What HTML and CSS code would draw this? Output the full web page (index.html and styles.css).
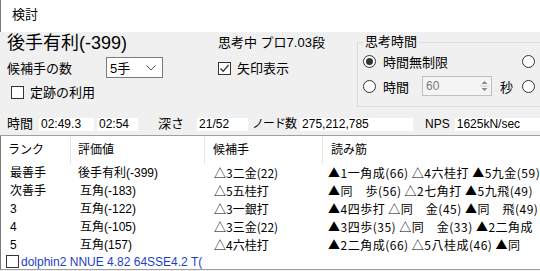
FILE: index.html
```html
<!DOCTYPE HTML>
<html>
<head>
  <meta charset="utf-8">
  <title>検討</title>
  <link rel="stylesheet" href="styles.css">
</head>
<body>
  <div class="win">
    <div class="titlebar">検討</div>

    <div class="panel">
      <div class="panel-top">
        <div class="col-left">
          <div class="eval-big">後手有利(-399)</div>
          <div class="field">
            <span class="field-label">候補手の数</span>
            <div class="select">
              <span>5手</span>
              <svg class="chev" width="10" height="6" viewBox="0 0 10 6"><path d="M0.5 0.5 L5 5 L9.5 0.5" fill="none" stroke="#555" stroke-width="1"/></svg>
            </div>
          </div>
          <div class="check check-joseki"><span class="box"></span>定跡の利用</div>
        </div>
        <div class="col-mid">
          <div class="think">思考中 プロ7.03段</div>
          <div class="check check-arrow">
            <span class="box"><svg width="11" height="11" viewBox="0 0 11 11"><path d="M1.5 5.5 L4.2 8.3 L9.5 2" fill="none" stroke="#333" stroke-width="1.3"/></svg></span>矢印表示
          </div>
        </div>
        <fieldset class="group">
          <legend>思考時間</legend>
          <div class="radio-row">
            <span class="radio on"></span><span class="radio-label">時間無制限</span>
            <span class="radio push"></span>
          </div>
          <div class="radio-row">
            <span class="radio"></span><span class="radio-label">時間</span>
            <div class="spin">
              <span class="spin-val">60</span>
              <span class="spin-btns">
                <svg width="9" height="16" viewBox="0 0 9 16"><path d="M1.5 6 L4.5 3 L7.5 6 Z" fill="#888"/><path d="M0 8 H9" stroke="#ccc"/><path d="M1.5 10 L4.5 13 L7.5 10 Z" fill="#888"/></svg>
              </span>
            </div>
            <span class="sec">秒</span>
            <span class="radio sec-radio"></span>
          </div>
        </fieldset>
      </div>

      <div class="stats">
        <span class="st-label">時間</span>
        <span class="st-box w-time">02:49.3</span>
        <span class="st-box w-total">02:54</span>
        <span class="st-label l-depth">深さ</span>
        <span class="st-box w-depth">21/52</span>
        <span class="st-label l-nodes">ノード数</span>
        <span class="st-box w-nodes">275,212,785</span>
        <span class="st-label l-nps">NPS</span>
        <span class="st-box w-nps">1625kN/sec</span>
      </div>
    </div>

    <div class="list">
      <div class="list-head">
        <div class="c1">ランク</div>
        <div class="c2">評価値</div>
        <div class="c3">候補手</div>
        <div class="c4">読み筋</div>
      </div>
      <div class="list-row">
        <div class="c1">最善手</div>
        <div class="c2">後手有利(-399)</div>
        <div class="c3">△3二金(22)</div>
        <div class="c4">▲1一角成(66) △4六桂打 ▲5九金(59)</div>
      </div>
      <div class="list-row">
        <div class="c1">次善手</div>
        <div class="c2 even">互角(-183)</div>
        <div class="c3">△5五桂打</div>
        <div class="c4">▲同　歩(56) △2七角打 ▲5九飛(49)</div>
      </div>
      <div class="list-row">
        <div class="c1">3</div>
        <div class="c2 even">互角(-122)</div>
        <div class="c3">△3一銀打</div>
        <div class="c4">▲4四歩打 △同　金(45) ▲同　飛(49)</div>
      </div>
      <div class="list-row">
        <div class="c1">4</div>
        <div class="c2 even">互角(-105)</div>
        <div class="c3">△3三金(22)</div>
        <div class="c4">▲3四歩(35) △同　金(33) ▲2二角成</div>
      </div>
      <div class="list-row">
        <div class="c1">5</div>
        <div class="c2 even">互角(157)</div>
        <div class="c3">△4六桂打</div>
        <div class="c4">▲2二角成(66) △5八桂成(46) ▲同</div>
      </div>
    </div>

    <div class="footer">
      <span class="box"></span>
      <span class="engine">dolphin2 NNUE 4.82 64SSE4.2 T(</span>
    </div>
  </div>
</body>
</html>
```

FILE: styles.css
```css
html,
body {
  margin: 0;
  padding: 0;
}
body {
  width: 540px;
  height: 271px;
  overflow: hidden;
  background: #f0f0f0;
  font-family: "Liberation Sans", "Noto Sans CJK JP", sans-serif;
  font-size: 13px;
  color: #000;
}
.win {
  width: 540px;
  overflow: hidden;
}
.titlebar {
  height: 32px;
  line-height: 30px;
  padding-left: 11px;
  background: #fff;
  border-left: 1px solid #7a7a7a;
  box-sizing: border-box;
}

/* upper panel */
.panel {
  padding-top: 1px;
  padding-bottom: 4px;
  border-bottom: 1px solid #a0a0a0;
}
.panel-top {
  display: flex;
  align-items: flex-start;
}
.col-left {
  width: 211px;
  padding-left: 7px;
  flex: none;
}
.eval-big {
  font-size: 18px;
  line-height: 20px;
  white-space: nowrap;
}
.field {
  display: flex;
  align-items: center;
  margin-top: 4px;
}
.field-label {
  width: 99px;
}
.select {
  width: 57px;
  height: 21px;
  box-sizing: border-box;
  background: #fff;
  border: 1px solid #7a7a7a;
  display: flex;
  align-items: center;
  justify-content: space-between;
  padding: 0 6px 0 3px;
}
.chev {
  display: block;
}
.check {
  display: flex;
  align-items: center;
  line-height: 15px;
}
.check .box,
.footer .box {
  width: 13px;
  height: 13px;
  box-sizing: border-box;
  border: 1px solid #333;
  background: #fff;
  margin-right: 6px;
  display: flex;
  align-items: center;
  justify-content: center;
  flex: none;
}
.check-joseki {
  margin-top: 7px;
  padding-left: 4px;
}
.col-mid {
  width: 139px;
  flex: none;
}
.think {
  line-height: 20px;
  white-space: nowrap;
}
.check-arrow {
  margin-top: 8px;
}

/* think time group */
.group {
  margin: 0;
  padding: 0 20px 9px 5px;
  border: 1px solid #dcdcdc;
  flex: none;
}
.group legend {
  padding: 0 2px;
  line-height: 18px;
}
.radio-row {
  width: 172px;
  height: 20px;
  display: flex;
  align-items: center;
}
.radio-row + .radio-row {
  margin-top: 4px;
  height: 22px;
}
.radio {
  width: 13px;
  height: 13px;
  box-sizing: border-box;
  border: 1px solid #333;
  border-radius: 50%;
  background: #fff;
  flex: none;
  display: flex;
  align-items: center;
  justify-content: center;
}
.radio.on::after {
  content: "";
  width: 7px;
  height: 7px;
  border-radius: 50%;
  background: #333;
}
.radio-label {
  margin-left: 7px;
  white-space: nowrap;
}
.push {
  margin-left: auto;
}
.spin {
  width: 70px;
  height: 20px;
  box-sizing: border-box;
  margin-left: 13px;
  border: 1px solid #c0c0c0;
  background: #f4f4f4;
  display: flex;
  align-items: center;
  justify-content: space-between;
  padding: 0 2px 0 3px;
  color: #7a7a7a;
  font-size: 12px;
}
.spin-btns svg {
  display: block;
}
.sec {
  margin-left: 8px;
}
.sec-radio {
  margin-left: auto;
}

/* stats line */
.stats {
  display: flex;
  align-items: center;
  height: 14px;
  margin-top: 10px;
  padding-left: 7px;
  white-space: nowrap;
}
.st-label {
  line-height: 14px;
}
.st-box {
  height: 13px;
  line-height: 13px;
  background: #fff;
  padding-left: 2px;
  box-sizing: border-box;
  font-size: 12px;
  flex: none;
}
.w-time {
  width: 55px;
  margin-left: 6px;
}
.w-total {
  width: 41px;
  margin-left: 3px;
}
.l-depth {
  margin-left: 20px;
}
.w-depth {
  width: 51px;
  margin-left: 13px;
}
.l-nodes {
  margin-left: 4px;
  width: 48px;
  font-size: 12px;
  letter-spacing: -1px;
}
.w-nodes {
  width: 113px;
}
.l-nps {
  margin-left: 12px;
  font-size: 12px;
}
.w-nps {
  width: 85px;
  margin-left: 5px;
}

/* candidate list */
.list {
  background: #fff;
  border-left: 1px solid #7a7a7a;
  font-size: 12px;
}
.list-head,
.list-row {
  display: flex;
  white-space: nowrap;
}
.list-head {
  height: 28px;
  line-height: 28px;
}
.list-row {
  height: 18px;
  line-height: 18px;
}
.list-head > div,
.list-row > div {
  overflow: hidden;
  flex: none;
  box-sizing: border-box;
}
.c1 {
  width: 69px;
  padding-left: 9px;
}
.c2 {
  width: 134px;
  padding-left: 7px;
}
.c3 {
  width: 118px;
  padding-left: 8px;
}
.c4 {
  width: 218px;
  padding-left: 3px;
}
.list-row .c3,
.list-row .c4 {
  font-family: "Noto Sans CJK JP", sans-serif;
}
.list-row .c4 {
  letter-spacing: 0.5px;
}
.list-head .c1 {
  padding-left: 7px;
}
.list-head .c4 {
  padding-left: 8px;
}
.list-head .c2,
.list-head .c3,
.list-head .c4 {
  border-left: 1px solid #e5e5e5;
}
.list-row .c2,
.list-row .c3,
.list-row .c4 {
  margin-left: 1px;
}
.list-row .c2.even {
  padding-left: 9px;
}

/* footer */
.footer {
  height: 16px;
  display: flex;
  align-items: center;
  background: #fff;
  border-left: 1px solid #7a7a7a;
  border-bottom: 1px solid #a0a0a0;
  padding-left: 5px;
  box-sizing: border-box;
}
.footer .box {
  margin-right: 2px;
}
.engine {
  width: 185px;
  overflow: hidden;
  white-space: nowrap;
  color: #1c3fc8;
  font-size: 12px;
  line-height: 14px;
}
```
